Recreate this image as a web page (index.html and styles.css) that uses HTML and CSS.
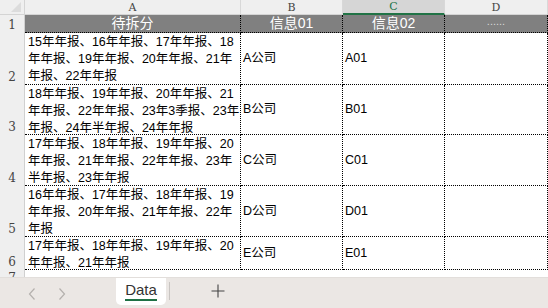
FILE: index.html
```html
<!doctype html>
<html>
<head>
<meta charset="utf-8">
<link rel="stylesheet" href="styles.css">
</head>
<body>
<div class="book">
  <div class="sheet">
    <div class="corner"><span class="corner__tri"></span></div>
    <div class="colhead">A</div>
    <div class="colhead">B</div>
    <div class="colhead colhead--active">C</div>
    <div class="colhead">D</div>

    <div class="rowhead">1</div>
    <div class="cell cell--title">待拆分</div>
    <div class="cell cell--title">信息01</div>
    <div class="cell cell--title">信息02</div>
    <div class="cell cell--title cell--dim">......</div>

    <div class="rowhead">2</div>
    <div class="cell cell--wrap">15年年报、16年年报、17年年报、18<br>年年报、19年年报、20年年报、21年<br>年报、22年年报</div>
    <div class="cell">A公司</div>
    <div class="cell">A01</div>
    <div class="cell"></div>

    <div class="rowhead">3</div>
    <div class="cell cell--wrap">18年年报、19年年报、20年年报、21<br>年年报、22年年报、23年3季报、23年<br>年报、24年半年报、24年年报</div>
    <div class="cell">B公司</div>
    <div class="cell">B01</div>
    <div class="cell"></div>

    <div class="rowhead">4</div>
    <div class="cell cell--wrap">17年年报、18年年报、19年年报、20<br>年年报、21年年报、22年年报、23年<br>半年报、23年年报</div>
    <div class="cell">C公司</div>
    <div class="cell">C01</div>
    <div class="cell"></div>

    <div class="rowhead">5</div>
    <div class="cell cell--wrap">16年年报、17年年报、18年年报、19<br>年年报、20年年报、21年年报、22年<br>年报</div>
    <div class="cell">D公司</div>
    <div class="cell">D01</div>
    <div class="cell"></div>

    <div class="rowhead">6</div>
    <div class="cell cell--wrap">17年年报、18年年报、19年年报、20<br>年年报、21年年报</div>
    <div class="cell">E公司</div>
    <div class="cell">E01</div>
    <div class="cell"></div>

    <div class="rowhead rowhead--cut">7</div>
    <div class="cell cell--empty"></div>
    <div class="cell cell--empty"></div>
    <div class="cell cell--empty"></div>
    <div class="cell cell--empty"></div>
  </div>

  <div class="tabs">
    <div class="tabs__nav">
      <svg width="8" height="14" viewBox="0 0 8 14"><path d="M6.5 1.5 1.5 7l5 5.5" fill="none" stroke="#b4b0ad" stroke-width="1.2"/></svg>
      <svg width="8" height="14" viewBox="0 0 8 14"><path d="M1.5 1.5 6.5 7l-5 5.5" fill="none" stroke="#b4b0ad" stroke-width="1.2"/></svg>
    </div>
    <div class="tab tab--active"><span class="tab__label">Data</span></div>
    <span class="tabs__sep"></span>
    <div class="tabs__add">
      <svg width="14" height="14" viewBox="0 0 14 14"><path d="M7 0.5v13M0.5 7h13" fill="none" stroke="#444" stroke-width="1.1"/></svg>
    </div>
  </div>
</div>
</body>
</html>
```

FILE: styles.css
```css
body {
    margin: 0;
    background: #fff;
    font-family: "Liberation Sans", "Noto Sans CJK SC", sans-serif;
}
.book {
    width: 548px;
    height: 308px;
    display: flex;
    flex-direction: column;
    overflow: hidden;
}
.sheet {
    display: grid;
    grid-template-columns: 25px 216px 102px 102px 1fr;
    grid-template-rows: 15px 18px 52px 50px 51px 51px 33px 7px;
    overflow: hidden;
}
.corner {
    background: #efefef;
    border-right: 1px solid #d4d4d4;
    border-bottom: 1px solid #d4d4d4;
    position: relative;
}
.corner__tri {
    position: absolute;
    right: 3px;
    bottom: 2px;
    width: 0;
    height: 0;
    border-left: 10px solid transparent;
    border-bottom: 10px solid #dcdcdc;
}
.colhead {
    background: #efefef;
    border-right: 1px solid #d8d8d8;
    border-bottom: 1px solid #d4d4d4;
    font-family: "DejaVu Serif", "Liberation Serif", serif;
    font-size: 11px;
    color: #444;
    display: flex;
    align-items: center;
    justify-content: center;
    line-height: 1;
}
.colhead--active {
    background: #d6d6d6;
    color: #217346;
    border-bottom: 2px solid #217346;
}
.rowhead {
    background: #efefef;
    border-right: 1px solid #d0d0d0;
    font-family: "DejaVu Serif", "Liberation Serif", serif;
    font-size: 12px;
    color: #444;
    display: flex;
    align-items: flex-end;
    justify-content: center;
    padding-bottom: 2px;
    line-height: 1;
}
.rowhead--cut {
    align-items: flex-start;
    padding-top: 2px;
}
.cell {
    border-right: 1px dotted #000;
    border-bottom: 1px dotted #000;
    font-size: 12.5px;
    color: #000;
    display: flex;
    align-items: center;
    padding-left: 2px;
    white-space: nowrap;
    overflow: hidden;
    line-height: 17px;
}
.cell--wrap {
    align-items: flex-start;
    padding-left: 3px;
    padding-top: 1px;
}
.cell--title {
    background: #808080;
    color: #fff;
    font-size: 14px;
    justify-content: center;
    padding-left: 0;
}
.cell--dim {
    color: #d8d8d8;
    font-size: 11px;
    align-items: flex-end;
    padding-bottom: 2px;
}
.cell--empty {
    border: none;
}
.tabs {
    flex: 1;
    background: #ebe7e4;
    border-top: 1px solid #e2dedb;
    display: flex;
    align-items: flex-start;
}
.tabs__nav {
    width: 116px;
    display: flex;
    gap: 22px;
    padding: 9px 0 0 28px;
    box-sizing: border-box;
}
.tab {
    width: 50px;
    height: 27px;
    background: #fff;
    border-radius: 0 0 5px 5px;
    display: flex;
    justify-content: center;
}
.tab__label {
    font-size: 15px;
    color: #333;
    padding-top: 3px;
    height: 18px;
    border-bottom: 2px solid #1e7145;
    line-height: 18px;
}
.tabs__sep {
    width: 1px;
    height: 18px;
    background: #c9c5c2;
    margin: 4px 0 0 3px;
}
.tabs__add {
    padding: 6px 0 0 41px;
}
```
